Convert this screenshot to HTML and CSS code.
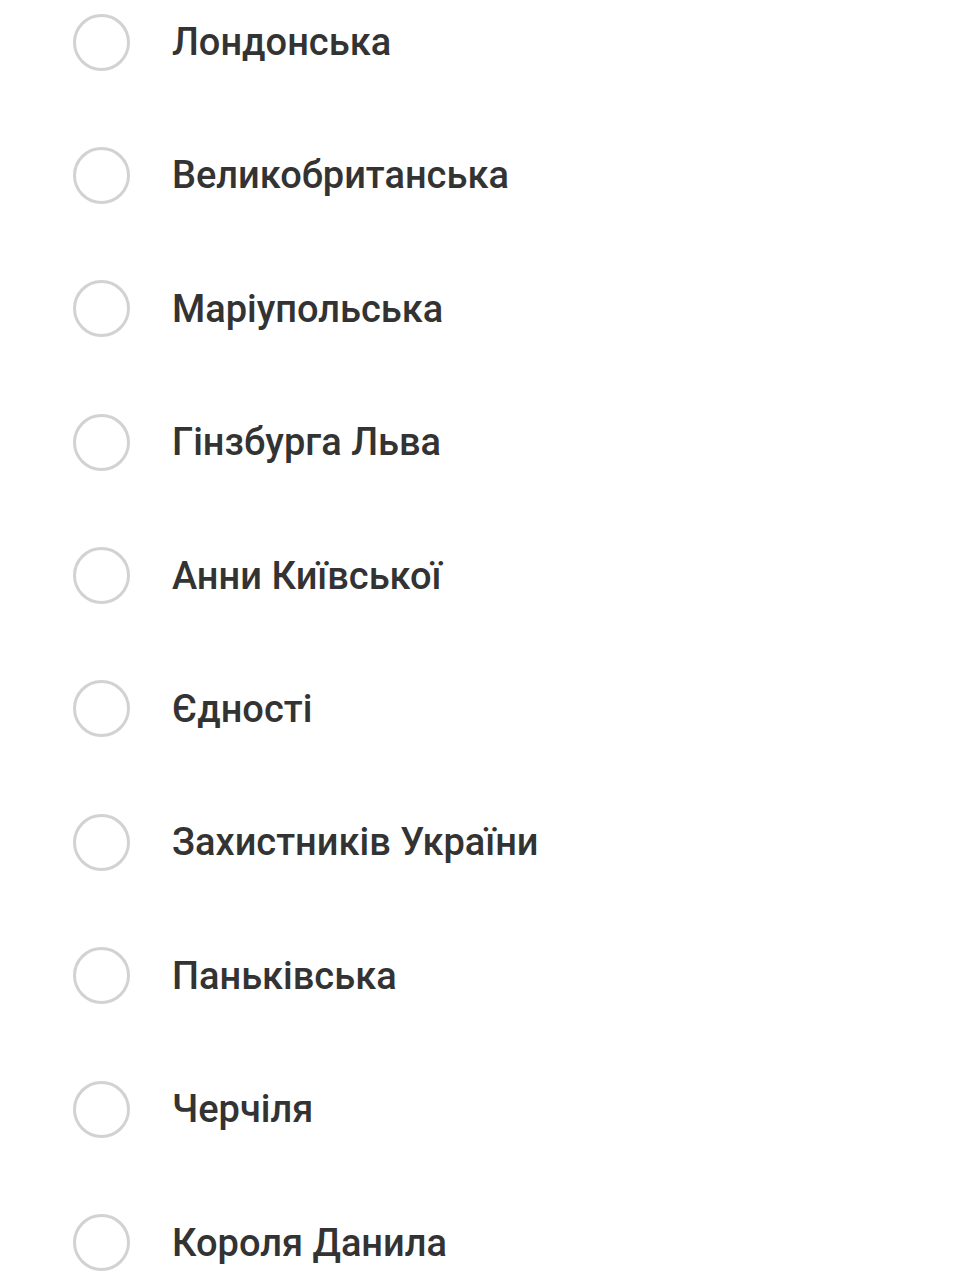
FILE: index.html
```html
<!DOCTYPE html>
<html lang="uk">
<head>
<meta charset="utf-8">
<link rel="stylesheet" href="styles.css">
</head>
<body>
<ul class="options">
  <li class="option"><span class="radio"></span><span class="label">Лондонська</span></li>
  <li class="option"><span class="radio"></span><span class="label">Великобританська</span></li>
  <li class="option"><span class="radio"></span><span class="label">Маріупольська</span></li>
  <li class="option"><span class="radio"></span><span class="label">Гінзбурга Льва</span></li>
  <li class="option"><span class="radio"></span><span class="label">Анни Київської</span></li>
  <li class="option"><span class="radio"></span><span class="label">Єдності</span></li>
  <li class="option"><span class="radio"></span><span class="label">Захистників України</span></li>
  <li class="option"><span class="radio"></span><span class="label">Паньківська</span></li>
  <li class="option"><span class="radio"></span><span class="label">Черчіля</span></li>
  <li class="option"><span class="radio"></span><span class="label">Короля Данила</span></li>
</ul>
</body>
</html>
```
FILE: styles.css
```css
html, body {
  margin: 0;
  padding: 0;
  background: #ffffff;
}
body {
  font-family: Roboto, "Noto Sans", sans-serif;
  overflow: hidden;
}
.options {
  list-style: none;
  margin: 0;
  padding: 13.5px 0 0 73px;
  display: flex;
  flex-direction: column;
  gap: 76.4px;
}
.option {
  display: flex;
  align-items: center;
  height: 57px;
}
.radio {
  box-sizing: border-box;
  width: 57px;
  height: 57px;
  border: 3px solid #d2d2d2;
  border-radius: 50%;
  flex: none;
}
.label {
  margin-left: 42px;
  font-size: 38px;
  font-weight: 500;
  color: #333333;
  line-height: 1;
}
```
